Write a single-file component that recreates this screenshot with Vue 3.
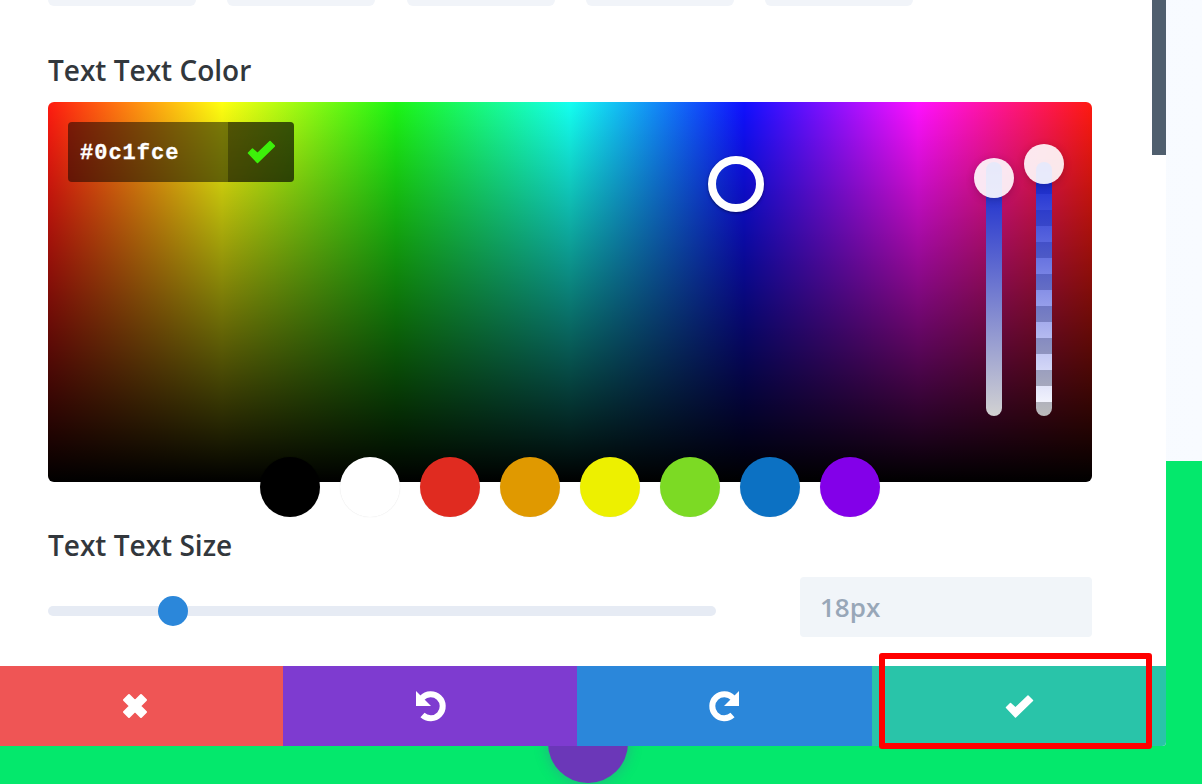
<script setup>
const chips = [1, 2, 3, 4, 5];
const swatches = ["#000000", "#ffffff", "#e02b20", "#e09900", "#edf000", "#7cda24", "#0c71c3", "#8300e9"];
</script>

<template>
  <div class="page">
    <div class="backdrop">
      <div class="backdrop-top"></div>
      <div class="backdrop-bottom"></div>
    </div>
    <div class="fab"></div>

    <div class="modal">
      <div class="modal-body">
        <div class="content">
          <div class="chips">
            <div v-for="chip in chips" :key="chip" class="chip"></div>
          </div>

          <label class="label first">Text Text Color</label>
          <div class="picker">
            <div class="hex">
              <span class="hex-value">#0c1fce</span>
              <span class="hex-ok">
                <svg width="28" height="24" viewBox="6 8.5 28 24">
                  <path
                    d="M7.5 21.5 L11.5 17.5 L16.5 22 L29 10 L33.5 14.5 L16.5 31 Z"
                    fill="#3df00a"
                    stroke="#3df00a"
                    stroke-width="1.5"
                    stroke-linejoin="round"
                  />
                </svg>
              </span>
            </div>
            <div class="handle"></div>
            <div class="bar bar-tint"><span class="knob knob-tint"></span></div>
            <div class="bar bar-alpha"><span class="knob knob-alpha"></span></div>
          </div>
          <div class="swatches">
            <span
              v-for="color in swatches"
              :key="color"
              class="swatch"
              :style="{ background: color }"
            ></span>
          </div>

          <label class="label second">Text Text Size</label>
          <div class="size-row">
            <div class="range"><span class="range-thumb"></span></div>
            <input class="size-input" value="18px" readonly />
          </div>
        </div>
        <div class="scrollbar"></div>
      </div>

      <div class="footer">
        <button class="action cancel">
          <svg width="26" height="26" viewBox="0 0 26 26">
            <path
              d="M7 2 L13 8 L19 2 L24 7 L18 13 L24 19 L19 24 L13 18 L7 24 L2 19 L8 13 L2 7 Z"
              fill="#fff"
              stroke="#fff"
              stroke-width="2"
              stroke-linejoin="round"
            />
          </svg>
        </button>
        <button class="action undo">
          <svg width="32" height="32" viewBox="0 0 32 32">
            <path d="M8 8 A12 12 0 1 1 8.5 25" fill="none" stroke="#fff" stroke-width="6" />
            <path d="M2 1 L2 16 L17 16 Z" fill="#fff" />
          </svg>
        </button>
        <button class="action redo">
          <svg width="32" height="32" viewBox="0 0 32 32">
            <path d="M24 8 A12 12 0 1 0 23.5 25" fill="none" stroke="#fff" stroke-width="6" />
            <path d="M30 1 L30 16 L15 16 Z" fill="#fff" />
          </svg>
        </button>
        <button class="action save">
          <svg width="40" height="40" viewBox="0 0 40 40">
            <path
              d="M7.5 21.5 L11.5 17.5 L16.5 22 L29 10 L33.5 14.5 L16.5 31 Z"
              fill="#fff"
              stroke="#fff"
              stroke-width="1.5"
              stroke-linejoin="round"
            />
          </svg>
        </button>
      </div>
    </div>

    <div class="highlight"></div>
  </div>
</template>

<style>
html,
body {
  margin: 0;
  background: #fff;
}
</style>

<style scoped>
.page {
  position: relative;
  width: 1202px;
  height: 784px;
  overflow: hidden;
  font-family: "Open Sans", sans-serif;
}

.backdrop {
  display: flex;
  flex-direction: column;
  height: 100%;
}

.backdrop-top {
  height: 461px;
  background: linear-gradient(to right, #eff4fd, #f8fbff);
}

.backdrop-bottom {
  flex: 1;
  background: #04e86c;
}

.fab {
  position: absolute;
  left: 548px;
  top: 703px;
  width: 80px;
  height: 80px;
  border-radius: 50%;
  background: #6b37b8;
  box-shadow: 0 0 14px rgba(107, 55, 184, 0.35);
}

.modal {
  position: absolute;
  left: 0;
  top: 0;
  width: 1166px;
  height: 746px;
  display: flex;
  flex-direction: column;
  background: #fff;
  border-radius: 0 0 4px 0;
  overflow: hidden;
}

.modal-body {
  flex: 1;
  display: flex;
  min-height: 0;
}

.content {
  width: 1044px;
  padding-left: 48px;
}

.scrollbar {
  width: 14px;
  height: 155px;
  margin-left: 60px;
  background: #505f6e;
}

.chips {
  display: flex;
  gap: 31.25px;
}

.chip {
  width: 148px;
  height: 6px;
  background: #f1f4f9;
  border-radius: 0 0 6px 6px;
}

.label {
  display: block;
  font-size: 28px;
  line-height: 30px;
  font-weight: 600;
  color: #32373c;
}

.label.first {
  margin: 49px 0 17px;
}

.label.second {
  margin: 13px 0 17px;
}

.picker {
  position: relative;
  height: 380px;
  border-radius: 6px;
  background: linear-gradient(to bottom, transparent, #000),
    linear-gradient(to right, #ff1a10, #ffff10, #1cf514, #14fff0, #1010ff, #ff10ff, #ff1a10);
}

.hex {
  position: absolute;
  left: 20px;
  top: 20px;
  width: 226px;
  height: 60px;
  display: flex;
  border-radius: 4px;
  overflow: hidden;
  background: rgba(0, 0, 0, 0.5);
}

.hex-value {
  flex: 1;
  padding-left: 12px;
  font-family: "Liberation Mono", monospace;
  font-size: 22px;
  font-weight: 700;
  letter-spacing: 1px;
  line-height: 64px;
  color: #fff;
  -webkit-text-stroke: 0.3px #fff;
}

.hex-ok {
  width: 66px;
  display: flex;
  align-items: center;
  justify-content: center;
  background: rgba(0, 0, 0, 0.3);
}

.handle {
  position: absolute;
  left: 660px;
  top: 54px;
  width: 56px;
  height: 56px;
  box-sizing: border-box;
  border: 8px solid #fff;
  border-radius: 50%;
  box-shadow: 0 1px 3px rgba(0, 0, 0, 0.5);
}

.bar {
  position: absolute;
  top: 60px;
  width: 16px;
  height: 254px;
  border-radius: 8px;
}

.bar-tint {
  left: 938px;
  background: linear-gradient(to bottom, #0c1fce, #d2d2d2);
}

.bar-alpha {
  left: 988px;
  background: linear-gradient(to bottom, #0c1fce, rgba(12, 31, 206, 0)),
    repeating-linear-gradient(to bottom, #fff 0, #fff 16px, #bbb 16px, #bbb 32px);
}

.knob {
  position: absolute;
  left: -12px;
  width: 40px;
  height: 40px;
  border-radius: 50%;
  background: rgba(255, 255, 255, 0.9);
  box-shadow: 0 2px 8px rgba(0, 0, 0, 0.2);
}

.knob-tint {
  top: -4px;
}

.knob-alpha {
  top: -18px;
}

.swatches {
  display: flex;
  justify-content: center;
  gap: 20px;
  margin-top: -25px;
  position: relative;
}

.swatch {
  width: 60px;
  height: 60px;
  border-radius: 50%;
  box-shadow: 0 0 1px rgba(0, 0, 0, 0.15);
}

.size-row {
  display: flex;
  align-items: center;
  justify-content: space-between;
}

.range {
  position: relative;
  width: 668px;
  height: 10px;
  margin-top: 8px;
  border-radius: 5px;
  background: #e6ebf4;
}

.range-thumb {
  position: absolute;
  left: 110px;
  top: -10px;
  width: 30px;
  height: 30px;
  border-radius: 50%;
  background: #2b87da;
}

.size-input {
  width: 292px;
  height: 60px;
  box-sizing: border-box;
  padding: 0 20px;
  border: none;
  border-radius: 4px;
  outline: none;
  background: #f1f5f9;
  font-family: "Open Sans", sans-serif;
  font-size: 26px;
  font-weight: 600;
  color: #98a7b8;
}

.footer {
  display: grid;
  grid-template-columns: 283px 294px 295px 1fr;
  height: 80px;
}

.action {
  display: flex;
  align-items: center;
  justify-content: center;
  padding: 0;
  border: none;
}

.cancel {
  padding-right: 13px;
  background: #ef5555;
}

.undo {
  background: #7e3bd0;
}

.redo {
  background: #2b87da;
}

.save {
  background: #29c4a9;
}

.highlight {
  position: absolute;
  left: 879px;
  top: 653px;
  width: 273px;
  height: 96px;
  box-sizing: border-box;
  border: 6px solid #ff0000;
  border-radius: 3px;
}
</style>
